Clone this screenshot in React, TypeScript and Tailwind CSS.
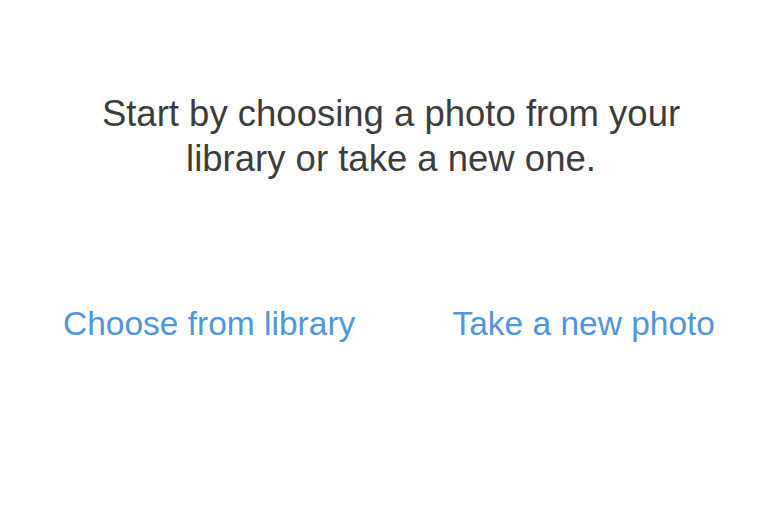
export default function App() {
  return (
    <div className="w-[782px] h-[520px] bg-white font-['Liberation_Sans',Arial,sans-serif] flex flex-col">
      <p className="mt-[91px] text-center text-[36.5px] leading-[45px] text-[#3d3d3d]">
        Start by choosing a photo from your
        <br />
        library or take a new one.
      </p>

      <div className="mt-[123px] flex justify-between pl-[63px] pr-[67px] text-[33.5px] leading-[40px] text-[#5096dc]">
        <button className="cursor-pointer">Choose from library</button>
        <button className="cursor-pointer">Take a new photo</button>
      </div>
    </div>
  );
}
